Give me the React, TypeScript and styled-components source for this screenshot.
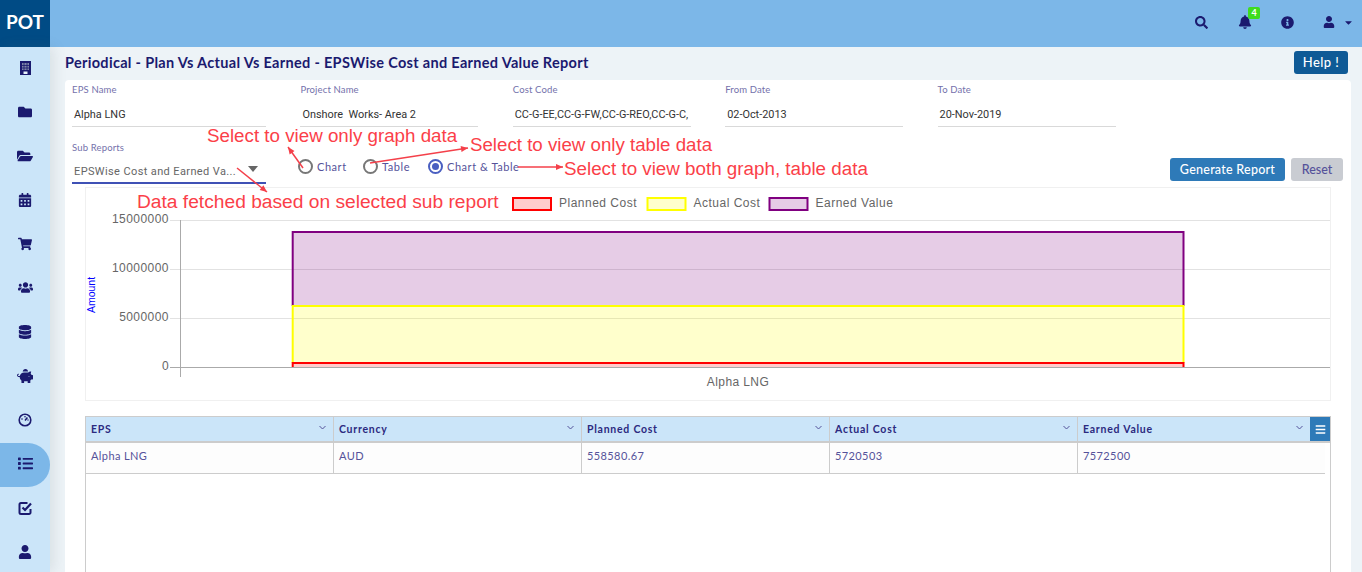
import React from "react";
import styled, { createGlobalStyle } from "styled-components";
import {
  FaFolder, FaFolderOpen, FaCalendarAlt, FaShoppingCart, FaUsers, FaDatabase,
  FaPiggyBank, FaList, FaUser, FaSearch, FaBell, FaInfoCircle, FaCaretDown, FaBars,
} from "react-icons/fa";

const Global = createGlobalStyle`
  html, body { margin: 0; padding: 0; height: 572px; overflow: hidden; background: #edf3f7; }
  body { font-family: "Lato", "Liberation Sans", sans-serif; }
  * { box-sizing: border-box; }
`;

const Page = styled.div`
  position: relative; width: 1362px; height: 572px; overflow: hidden;
  display: flex; flex-direction: column;
`;
const Header = styled.header`
  height: 47px; flex: none; display: flex; align-items: center; background: #7cb7e8;
`;
const Logo = styled.div`
  width: 50px; height: 47px; background: #004b85; color: #fff; font: 700 19px "Lato", sans-serif;
  display: flex; align-items: center; justify-content: center; padding-bottom: 4px;
`;
const TopIcons = styled.div`
  margin-left: auto; display: flex; align-items: center; color: #1b1a6f; padding: 0 5px 3px 0;
`;
const TopIcon = styled.span<{ $w: number }>`
  position: relative; width: ${(p) => p.$w}px; display: flex; align-items: center; justify-content: center; font-size: 14px;
`;
const UserMenu = styled.span`
  width: 49px; padding-left: 15px; display: flex; align-items: center; gap: 8px;
`;
const Badge = styled.span`
  position: absolute; top: -8px; left: 24px; width: 12px; height: 12px; border-radius: 2px; background: #3fdc1e;
  color: #fff; font: 700 9px/12px "Lato", sans-serif; text-align: center;
`;
const Body = styled.div`display: flex; flex: 1; min-height: 0;`;
const Sidebar = styled.nav`
  width: 50px; flex: none; background: #cbe5f9; display: flex; flex-direction: column; box-shadow: 4px 0 12px rgba(90,110,120,.14);
`;
const NavItem = styled.div<{ $active?: boolean }>`
  height: 44px; flex: none; display: flex; align-items: center; justify-content: center; color: #1b1a6f; font-size: 14px; padding-bottom: 3px;
  background: ${(p) => (p.$active ? "#7cb7e8" : "transparent")};
  border-radius: ${(p) => (p.$active ? "0 22px 22px 0" : "0")};
`;
const Main = styled.main`flex: 1; min-width: 0; padding: 0 11px 0 15px; display: flex; flex-direction: column;`;
const TitleRow = styled.div`height: 33px; flex: none; display: flex; align-items: center; justify-content: space-between; padding: 0 3px 3px 0;`;
const Title = styled.h1`margin: 0; font: 700 14.5px "Lato", sans-serif; color: #1b1a6f; letter-spacing: .31px;`;
const HelpBtn = styled.button`
  width: 54px; height: 23px; border: 0; border-radius: 3px; background: #0f5a96; color: #fff; font: 500 13px "Lato", sans-serif; letter-spacing: .4px; padding: 0;
`;
const Card = styled.section`
  flex: 1; background: #fff; border-radius: 4px 4px 0 0; padding: 0 0 0 7px; display: flex; flex-direction: column; min-height: 0;
`;
const Fields = styled.div`display: flex; gap: 34.4px; height: 47px; flex: none;`;
const Field = styled.div<{ $w: number }>`width: ${(p) => p.$w}px; flex: none;`;
const Label = styled.div`font: 400 9.5px/11px "Lato", sans-serif; color: #7471ab; letter-spacing: .15px; padding-top: 4px; height: 15px;`;
const Value = styled.div`
  height: 32px; border-bottom: 1px solid #d9d9d9; font: 400 10.9px/39px "Roboto", sans-serif; color: #333; padding-left: 2px; white-space: nowrap; overflow: hidden;
`;
const Controls = styled.div`display: flex; height: 60px; flex: none; position: relative;`;
const SubField = styled.div`width: 194px; padding-top: 11px;`;
const SelectBox = styled.div`
  height: 31px; border-bottom: 2px solid #3f51b5; display: flex; align-items: center; justify-content: space-between;
  font: 400 11px "Roboto", sans-serif; color: #666; letter-spacing: .38px; padding: 8px 8px 0 2px;
`;
const Caret = styled.span`width: 0; height: 0; border-left: 5px solid transparent; border-right: 5px solid transparent; border-top: 6px solid #666; margin-top: -5px;`;
const Radios = styled.div`display: flex; align-items: center; height: 20px; margin: 29px 0 0 32px;`;
const RadioItem = styled.label`display: flex; align-items: center; gap: 4px; width: 65px; white-space: nowrap; font: 400 11px "Lato", sans-serif; color: #55529a; letter-spacing: .55px;`;
const Circle = styled.span<{ $on?: boolean }>`
  width: 15px; height: 15px; flex: none; border-radius: 50%; border: 2px solid ${(p) => (p.$on ? "#4a5fc1" : "#777")};
  display: flex; align-items: center; justify-content: center; margin-top: 1px;
  &::after { content: ""; width: 7px; height: 7px; border-radius: 50%; background: ${(p) => (p.$on ? "#4a5fc1" : "transparent")}; }
`;
const Actions = styled.div`margin-left: auto; display: flex; gap: 6px; padding: 31px 8px 0 0;`;
const PrimaryBtn = styled.button`width: 115px; height: 23px; border: 0; border-radius: 3px; background: #2e7ab8; color: #fff; font: 500 12.5px "Lato", sans-serif; letter-spacing: .25px; padding: 0;`;
const ResetBtn = styled.button`width: 52px; height: 23px; border: 0; border-radius: 3px; background: #c9ccd2; color: #55529a; font: 500 12.5px "Lato", sans-serif; padding: 0;`;
const ChartBox = styled.div`margin-left: 13px; margin-right: 20px; height: 214px; border: 1px solid #f0f0f0; flex: none; svg { display: block; }`;
const Table = styled.div`
  margin: 15px 20px 0 13px; flex: 1; border: 1px solid #ccc; border-bottom: 0; min-height: 0; position: relative;
`;
const HeadRow = styled.div`display: grid; grid-template-columns: 248px 248px 248px 248px 1fr; height: 26px; background: #cbe5f9; border-bottom: 2px solid #ccc;`;
const HeadCell = styled.div`
  display: flex; align-items: center; justify-content: space-between; padding: 0 7px 0 5px; border-right: 1px solid #ccc; font: 700 10.5px "Lato", sans-serif; color: #2c2a80; letter-spacing: .75px;
  &:last-child { border-right: 0; padding-right: 27px; }
`;
const Chev = styled.svg`width: 7px; height: 5px; margin-top: -3px; fill: none; stroke: #55529a; stroke-width: 1;`;
const MenuBtn = styled.span`
  position: absolute; top: 0; right: 0; width: 20px; height: 24px; background: #2e7ab8; color: #fff; display: flex; align-items: center; justify-content: center; font-size: 11px;
`;
const DataRow = styled.div`display: grid; grid-template-columns: 248px 248px 248px 248px 1fr; margin-right: 5px; height: 31px; background: #fdfdfd; border-bottom: 1px solid #ccc;`;
const DataCell = styled.div`
  padding: 6px 5px 0; border-right: 1px solid #ccc; font: 400 11px "Lato", sans-serif; color: #55529a; letter-spacing: .4px;
  &:last-child { border-right: 0; }
`;
const Overlay = styled.div`position: absolute; inset: 0; pointer-events: none;`;
const Note = styled.span<{ $x: number; $y: number; $size: number }>`
  position: absolute; left: ${(p) => p.$x}px; top: ${(p) => p.$y}px; color: #fb3f49; font: 400 ${(p) => p.$size}px/20px "Liberation Sans", Arial, sans-serif; white-space: nowrap;
`;
const ArrowSvg = styled.svg`position: absolute; left: 0; top: 0;`;

const BuildingIcon = () => (
  <svg width="11" height="14" viewBox="0 0 11 14">
    <rect width="11" height="14" fill="#1b1a6f" />
    <path d="M2 2h7v7H2z" fill="#7f86a8" />
    <path d="M4 2v7M7 2v7M2 4.5h7M2 7h7" stroke="#1b1a6f" strokeWidth=".8" />
    <rect x="3.5" y="10.5" width="4" height="2.5" fill="#e8f2fb" />
  </svg>
);
const GaugeIcon = () => (
  <svg width="14" height="14" viewBox="0 0 14 14" fill="none">
    <circle cx="7" cy="7" r="5.8" stroke="currentColor" strokeWidth="1.6" />
    <path d="M7 7.5 9.4 4.6" stroke="currentColor" strokeWidth="1.5" />
    <circle cx="4" cy="6" r=".8" fill="currentColor" /><circle cx="7" cy="3.8" r=".8" fill="currentColor" /><circle cx="10" cy="7" r=".7" fill="currentColor" />
  </svg>
);
const CheckIcon = () => (
  <svg width="15" height="14" viewBox="0 0 15 14" fill="none">
    <path d="M9.5 2H3a1.5 1.5 0 0 0-1.5 1.5v8A1.5 1.5 0 0 0 3 13h8a1.5 1.5 0 0 0 1.5-1.5V8" stroke="currentColor" strokeWidth="2" />
    <path d="M4.5 6.5 7 9l6-6.5" stroke="currentColor" strokeWidth="2.2" />
  </svg>
);

const navIcons = [
  <BuildingIcon />, <FaFolder />, <FaFolderOpen size={16} />, <FaCalendarAlt />, <FaShoppingCart />, <FaUsers size={15} />, <FaDatabase />, <FaPiggyBank size={16} />,
  <GaugeIcon />, <FaList size={15} />, <CheckIcon />, <FaUser />,
];
const cols = ["EPS", "Currency", "Planned Cost", "Actual Cost", "Earned Value"];
const vals = ["Alpha LNG", "AUD", "558580.67", "5720503", "7572500"];
const ticks: [string, number][] = [["15000000", 220], ["10000000", 269], ["5000000", 318], ["0", 367]];
const legend = [
  { x: 512, label: "Planned Cost", c: "255,0,0", s: "#f00" },
  { x: 646.5, label: "Actual Cost", c: "255,255,0", s: "#ff0" },
  { x: 768.5, label: "Earned Value", c: "128,0,128", s: "#800080" },
];
const bars = [
  { t: 232, b: 306, c: "128,0,128", s: "#800080" },
  { t: 306, b: 363, c: "255,255,0", s: "#ff0" },
  { t: 363, b: 367, c: "255,0,0", s: "#f00" },
];
const arrows = [
  [303, 168, 288, 147], [370, 163, 468, 148], [518, 167, 563, 167], [237, 168, 267, 192],
];

function Arrow({ a }: { a: number[] }) {
  const [x1, y1, x2, y2] = a;
  const an = Math.atan2(y2 - y1, x2 - x1);
  const p = (d: number, o: number) => `${x2 - d * Math.cos(an) - o * Math.sin(an)},${y2 - d * Math.sin(an) + o * Math.cos(an)}`;
  return (
    <g>
      <line x1={x1} y1={y1} x2={x2} y2={y2} stroke="#f4404a" strokeWidth="1.5" />
      <polygon points={`${x2},${y2} ${p(7, 3)} ${p(7, -3)}`} fill="#f4404a" />
    </g>
  );
}

export default function App() {
  return (
    <Page>
      <Global />
      <Header>
        <Logo>POT</Logo>
        <TopIcons>
          <TopIcon $w={46}><FaSearch size={13} /></TopIcon>
          <TopIcon $w={42}><FaBell size={14} /><Badge>4</Badge></TopIcon>
          <TopIcon $w={42}><FaInfoCircle size={13} /></TopIcon>
          <UserMenu><FaUser size={12} /><FaCaretDown size={11} /></UserMenu>
        </TopIcons>
      </Header>
      <Body>
        <Sidebar>
          {navIcons.map((ic, i) => <NavItem key={i} $active={i === 9}>{ic}</NavItem>)}
        </Sidebar>
        <Main>
          <TitleRow>
            <Title>Periodical - Plan Vs Actual Vs Earned - EPSWise Cost and Earned Value Report</Title>
            <HelpBtn>Help !</HelpBtn>
          </TitleRow>
          <Card>
            <Fields>
              <Field $w={194}><Label>EPS Name</Label><Value>Alpha LNG</Value></Field>
              <Field $w={178}><Label>Project Name</Label><Value>Onshore&nbsp; Works- Area 2</Value></Field>
              <Field $w={178}><Label>Cost Code</Label><Value>CC-G-EE,CC-G-FW,CC-G-REO,CC-G-C,</Value></Field>
              <Field $w={178}><Label>From Date</Label><Value>02-Oct-2013</Value></Field>
              <Field $w={178}><Label>To Date</Label><Value>20-Nov-2019</Value></Field>
            </Fields>
            <Controls>
              <SubField>
                <Label>Sub Reports</Label>
                <SelectBox>EPSWise Cost and Earned Va...<Caret /></SelectBox>
              </SubField>
              <Radios>
                <RadioItem><Circle />Chart</RadioItem>
                <RadioItem><Circle />Table</RadioItem>
                <RadioItem><Circle $on />Chart &amp; Table</RadioItem>
              </Radios>
              <Actions>
                <PrimaryBtn>Generate Report</PrimaryBtn>
                <ResetBtn>Reset</ResetBtn>
              </Actions>
            </Controls>
            <ChartBox>
              <svg width="1244" height="212" viewBox="86 188 1244 212">
                {legend.map((l) => (
                  <g key={l.label}>
                    <rect x={l.x + 1} y={198} width={38} height={12} fill={`rgba(${l.c},.2)`} stroke={l.s} strokeWidth="2" />
                    <text x={l.x + 47} y={206.5} fontFamily="Liberation Sans, Arial, sans-serif" fontSize="12" fill="#666" letterSpacing=".5">{l.label}</text>
                  </g>
                ))}
                {ticks.map(([t, y]) => (
                  <g key={t}>
                    <line x1={170} x2={1330} y1={y + .5} y2={y + .5} stroke={t === "0" ? "#aaa" : "#e2e2e2"} />
                    <text x={169} y={y + 3} textAnchor="end" fontFamily="Liberation Sans, Arial, sans-serif" fontSize="12" fill="#666" letterSpacing=".45">{t}</text>
                  </g>
                ))}
                <line x1={180.5} x2={180.5} y1={220} y2={377} stroke="#aaa" />
                {bars.map((b) => (
                  <g key={b.s}>
                    <rect x={292} y={b.t} width={892} height={b.b - b.t} fill={`rgba(${b.c},.2)`} />
                    <path d={`M292.7 ${b.b}V${b.t}H1183.5V${b.b}`} fill="none" stroke={b.s} strokeWidth="2" />
                  </g>
                ))}
                <text x={738} y={386} textAnchor="middle" fontFamily="Liberation Sans, Arial, sans-serif" fontSize="12" fill="#666" letterSpacing=".4">Alpha LNG</text>
                <text transform="translate(95 295) rotate(-90)" textAnchor="middle" fontFamily="Liberation Sans, Arial, sans-serif" fontSize="10.5" fill="#00f">Amount</text>
              </svg>
            </ChartBox>
            <Table>
              <HeadRow>
                {cols.map((c) => (
                  <HeadCell key={c}>{c}<Chev viewBox="0 0 7 5"><path d="M.5 1 3.5 4 6.5 1" /></Chev></HeadCell>
                ))}
              </HeadRow>
              <MenuBtn><FaBars /></MenuBtn>
              <DataRow>{vals.map((v) => <DataCell key={v}>{v}</DataCell>)}</DataRow>
            </Table>
          </Card>
        </Main>
      </Body>
      <Overlay>
        <ArrowSvg width="1362" height="572">
          {arrows.map((a, i) => <Arrow key={i} a={a} />)}
        </ArrowSvg>
        <Note $x={207} $y={126} $size={18.75}>Select to view only graph data</Note>
        <Note $x={470} $y={135} $size={18.7}>Select to view only table data</Note>
        <Note $x={564} $y={159} $size={18.8}>Select to view both graph, table data</Note>
        <Note $x={137} $y={192} $size={19.2}>Data fetched based on selected sub report</Note>
      </Overlay>
    </Page>
  );
}
